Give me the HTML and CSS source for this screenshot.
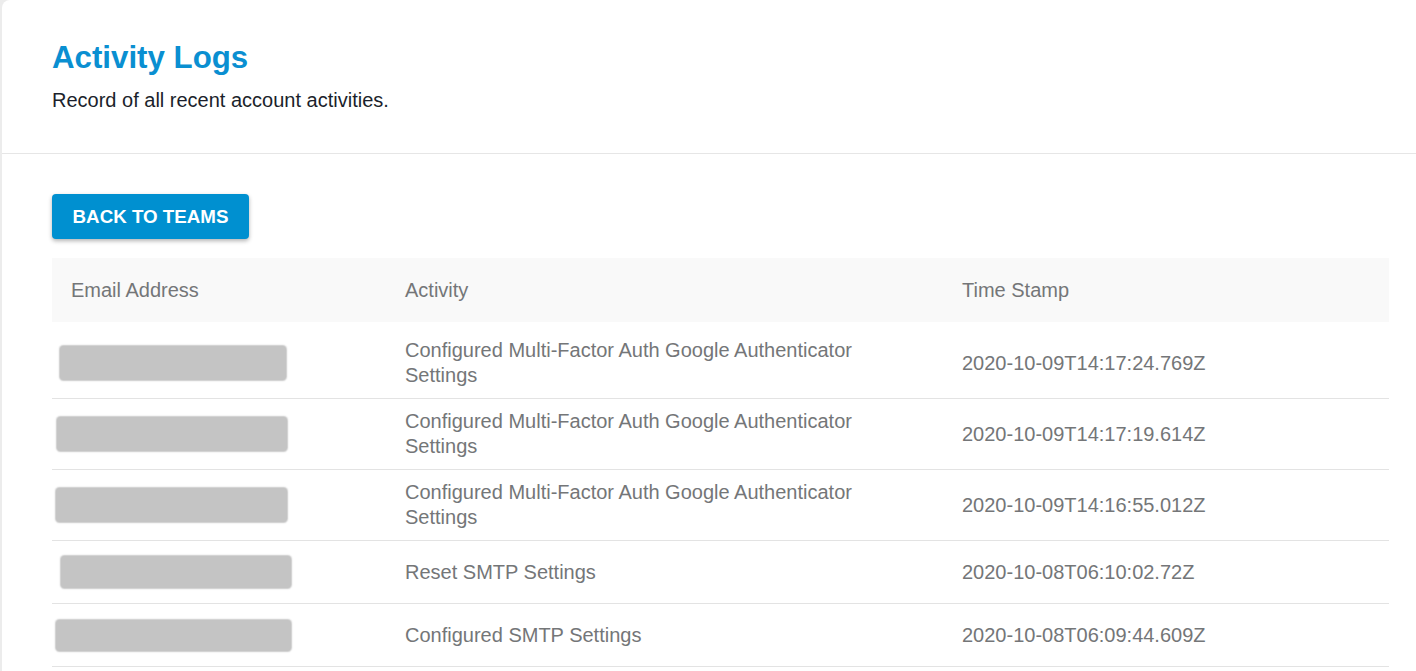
FILE: index.html
```html
<!DOCTYPE html>
<html lang="en">
<head>
<meta charset="utf-8">
<title>Activity Logs</title>
<link rel="stylesheet" href="styles.css">
</head>
<body>
<div class="card">
  <header class="card-head">
    <h1 class="title">Activity Logs</h1>
    <p class="subtitle">Record of all recent account activities.</p>
  </header>
  <section class="card-body">
    <button class="btn" type="button">BACK TO TEAMS</button>
    <table class="logs">
      <colgroup>
        <col class="c-email">
        <col class="c-activity">
        <col class="c-time">
      </colgroup>
      <thead>
        <tr>
          <th>Email Address</th>
          <th>Activity</th>
          <th>Time Stamp</th>
        </tr>
      </thead>
      <tbody>
        <tr class="first">
          <td class="email"><span class="redact r1"></span></td>
          <td>Configured Multi-Factor Auth Google Authenticator Settings</td>
          <td>2020-10-09T14:17:24.769Z</td>
        </tr>
        <tr>
          <td class="email"><span class="redact r2"></span></td>
          <td>Configured Multi-Factor Auth Google Authenticator Settings</td>
          <td>2020-10-09T14:17:19.614Z</td>
        </tr>
        <tr>
          <td class="email"><span class="redact r3"></span></td>
          <td>Configured Multi-Factor Auth Google Authenticator Settings</td>
          <td>2020-10-09T14:16:55.012Z</td>
        </tr>
        <tr>
          <td class="email"><span class="redact r4"></span></td>
          <td>Reset SMTP Settings</td>
          <td>2020-10-08T06:10:02.72Z</td>
        </tr>
        <tr>
          <td class="email"><span class="redact r5"></span></td>
          <td>Configured SMTP Settings</td>
          <td>2020-10-08T06:09:44.609Z</td>
        </tr>
      </tbody>
    </table>
  </section>
</div>
</body>
</html>
```

FILE: styles.css
```css
html, body {
  margin: 0;
  padding: 0;
}

body {
  background: #ececec;
  font-family: "Liberation Sans", Arial, sans-serif;
  overflow: hidden;
}

.card {
  margin-left: 2px;
  background: #ffffff;
  border-top-left-radius: 8px;
  min-height: 100vh;
}

.card-head {
  padding: 40px 27px 40px 50px;
  border-bottom: 1px solid #e6e6e6;
}

.title {
  margin: 0;
  font-size: 31.25px;
  line-height: 36px;
  font-weight: bold;
  color: #0a8fd1;
}

.subtitle {
  margin: 12px 0 0;
  font-size: 20px;
  line-height: 25px;
  color: #1b1f2b;
}

.card-body {
  padding: 40px 27px 0 50px;
}

.btn {
  display: flex;
  align-items: center;
  justify-content: center;
  height: 45px;
  width: 197px;
  padding: 0;
  border: none;
  border-radius: 4px;
  background: #0090d0;
  color: #ffffff;
  font-family: "Liberation Sans", Arial, sans-serif;
  font-size: 18.75px;
  font-weight: bold;
  box-shadow: 0 2px 4px rgba(0, 0, 0, 0.3);
  cursor: pointer;
}

.logs {
  margin-top: 19px;
  width: 100%;
  border-collapse: collapse;
  table-layout: fixed;
  font-size: 20px;
  line-height: 25px;
  color: #747678;
}

.c-email { width: 334px; }
.c-activity { width: 557px; }

.logs th {
  background: #f9f9f9;
  font-weight: normal;
  text-align: left;
  padding: 20px 19px 19px;
}

.logs td {
  padding: 10px 19px;
  height: 42px;
  vertical-align: middle;
  border-bottom: 1px solid #e3e3e3;
}

.logs tr.first td {
  padding-top: 16px;
}

.logs td.email {
  padding-left: 0;
  padding-right: 0;
}

.redact {
  display: block;
  height: 34px;
  background: #c4c4c4;
  border-radius: 4px;
  box-shadow: 0 0 1.5px 0.5px #cacaca;
}

.r1 { margin-left: 8px; width: 226px; }
.r2 { margin-left: 5px; width: 230px; }
.r3 { margin-left: 4px; width: 231px; }
.r4 { margin-left: 9px; width: 230px; height: 32px; }
.r5 { margin-left: 4px; width: 235px; height: 31px; }
```
